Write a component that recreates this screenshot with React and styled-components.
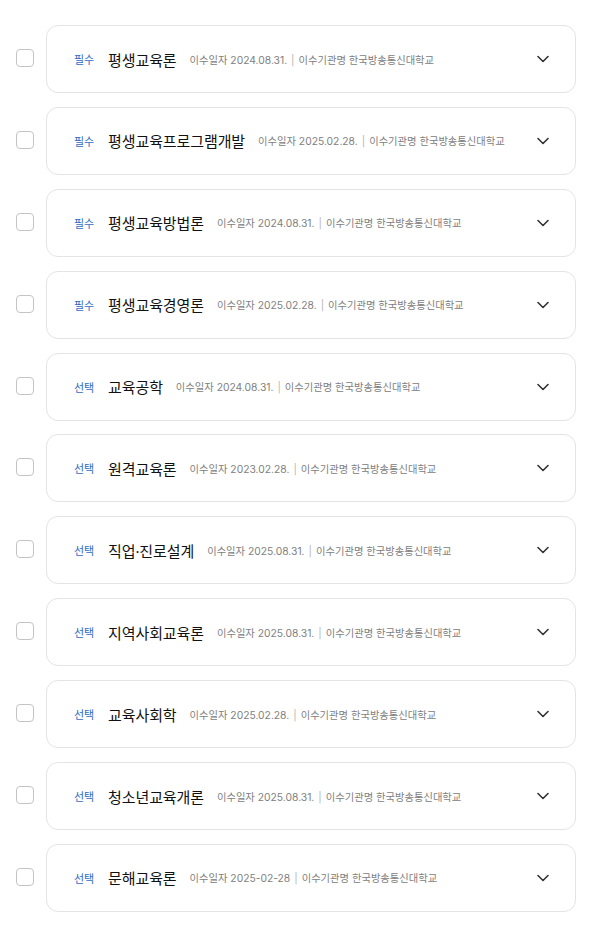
import React from "react";
import styled, { createGlobalStyle } from "styled-components";

const GlobalStyle = createGlobalStyle`
  html, body { margin: 0; padding: 0; background: #ffffff; }
  body { font-family: "Noto Sans CJK KR", "Noto Sans", sans-serif; }
`;

const List = styled.ul`
  list-style: none;
  margin: 0;
  padding: 25px 19px 0 16px;
  display: flex;
  flex-direction: column;
  gap: 13.9px;
`;

const Row = styled.li`
  display: flex;
  align-items: flex-start;
  gap: 12px;
`;

const Check = styled.span`
  flex: none;
  box-sizing: border-box;
  width: 18px;
  height: 18px;
  margin-top: 24px;
  border: 1px solid #c4c4c4;
  border-radius: 4px;
  background: #fff;
`;

const Card = styled.div`
  flex: 1;
  box-sizing: border-box;
  height: 68px;
  border: 1px solid #e4e4e4;
  border-radius: 12px;
  background: #fff;
  display: flex;
  align-items: center;
  padding: 0 26px 0 27px;
`;

const Badge = styled.span`
  flex: none;
  font-size: 11px;
  color: #2f6cc4;
  margin-right: 14px;
  letter-spacing: -0.1px;
`;

const Title = styled.span`
  flex: none;
  font-family: "Noto Sans", "Noto Sans CJK KR", sans-serif;
  font-size: 15px;
  color: #111;
  margin-right: 13px;
  letter-spacing: -0.1px;
`;

const Meta = styled.span`
  flex: 1;
  font-family: "Inter", "Noto Sans CJK KR", sans-serif;
  font-size: 10.3px;
  color: #808080;
  white-space: nowrap;
`;

const Sep = styled.span`
  color: #b5b5b5;
  margin: 0 4px;
`;

const Chevron = styled.svg`
  flex: none;
  width: 12px;
  height: 8px;
`;

const courses = [
  ["필수", "평생교육론", "2024.08.31."],
  ["필수", "평생교육프로그램개발", "2025.02.28."],
  ["필수", "평생교육방법론", "2024.08.31."],
  ["필수", "평생교육경영론", "2025.02.28."],
  ["선택", "교육공학", "2024.08.31."],
  ["선택", "원격교육론", "2023.02.28."],
  ["선택", "직업·진로설계", "2025.08.31."],
  ["선택", "지역사회교육론", "2025.08.31."],
  ["선택", "교육사회학", "2025.02.28."],
  ["선택", "청소년교육개론", "2025.08.31."],
  ["선택", "문해교육론", "2025-02-28"],
];

export default function App() {
  return (
    <>
      <GlobalStyle />
      <List>
        {courses.map(([type, title, date]) => (
          <Row key={title}>
            <Check />
            <Card>
              <Badge>{type}</Badge>
              <Title>{title}</Title>
              <Meta>
                이수일자 {date}
                <Sep>|</Sep>
                이수기관명 한국방송통신대학교
              </Meta>
              <Chevron viewBox="0 0 12 8">
                <polyline
                  points="1,1.5 6,6.5 11,1.5"
                  fill="none"
                  stroke="#333"
                  strokeWidth="1.6"
                  strokeLinecap="round"
                  strokeLinejoin="round"
                />
              </Chevron>
            </Card>
          </Row>
        ))}
      </List>
    </>
  );
}
